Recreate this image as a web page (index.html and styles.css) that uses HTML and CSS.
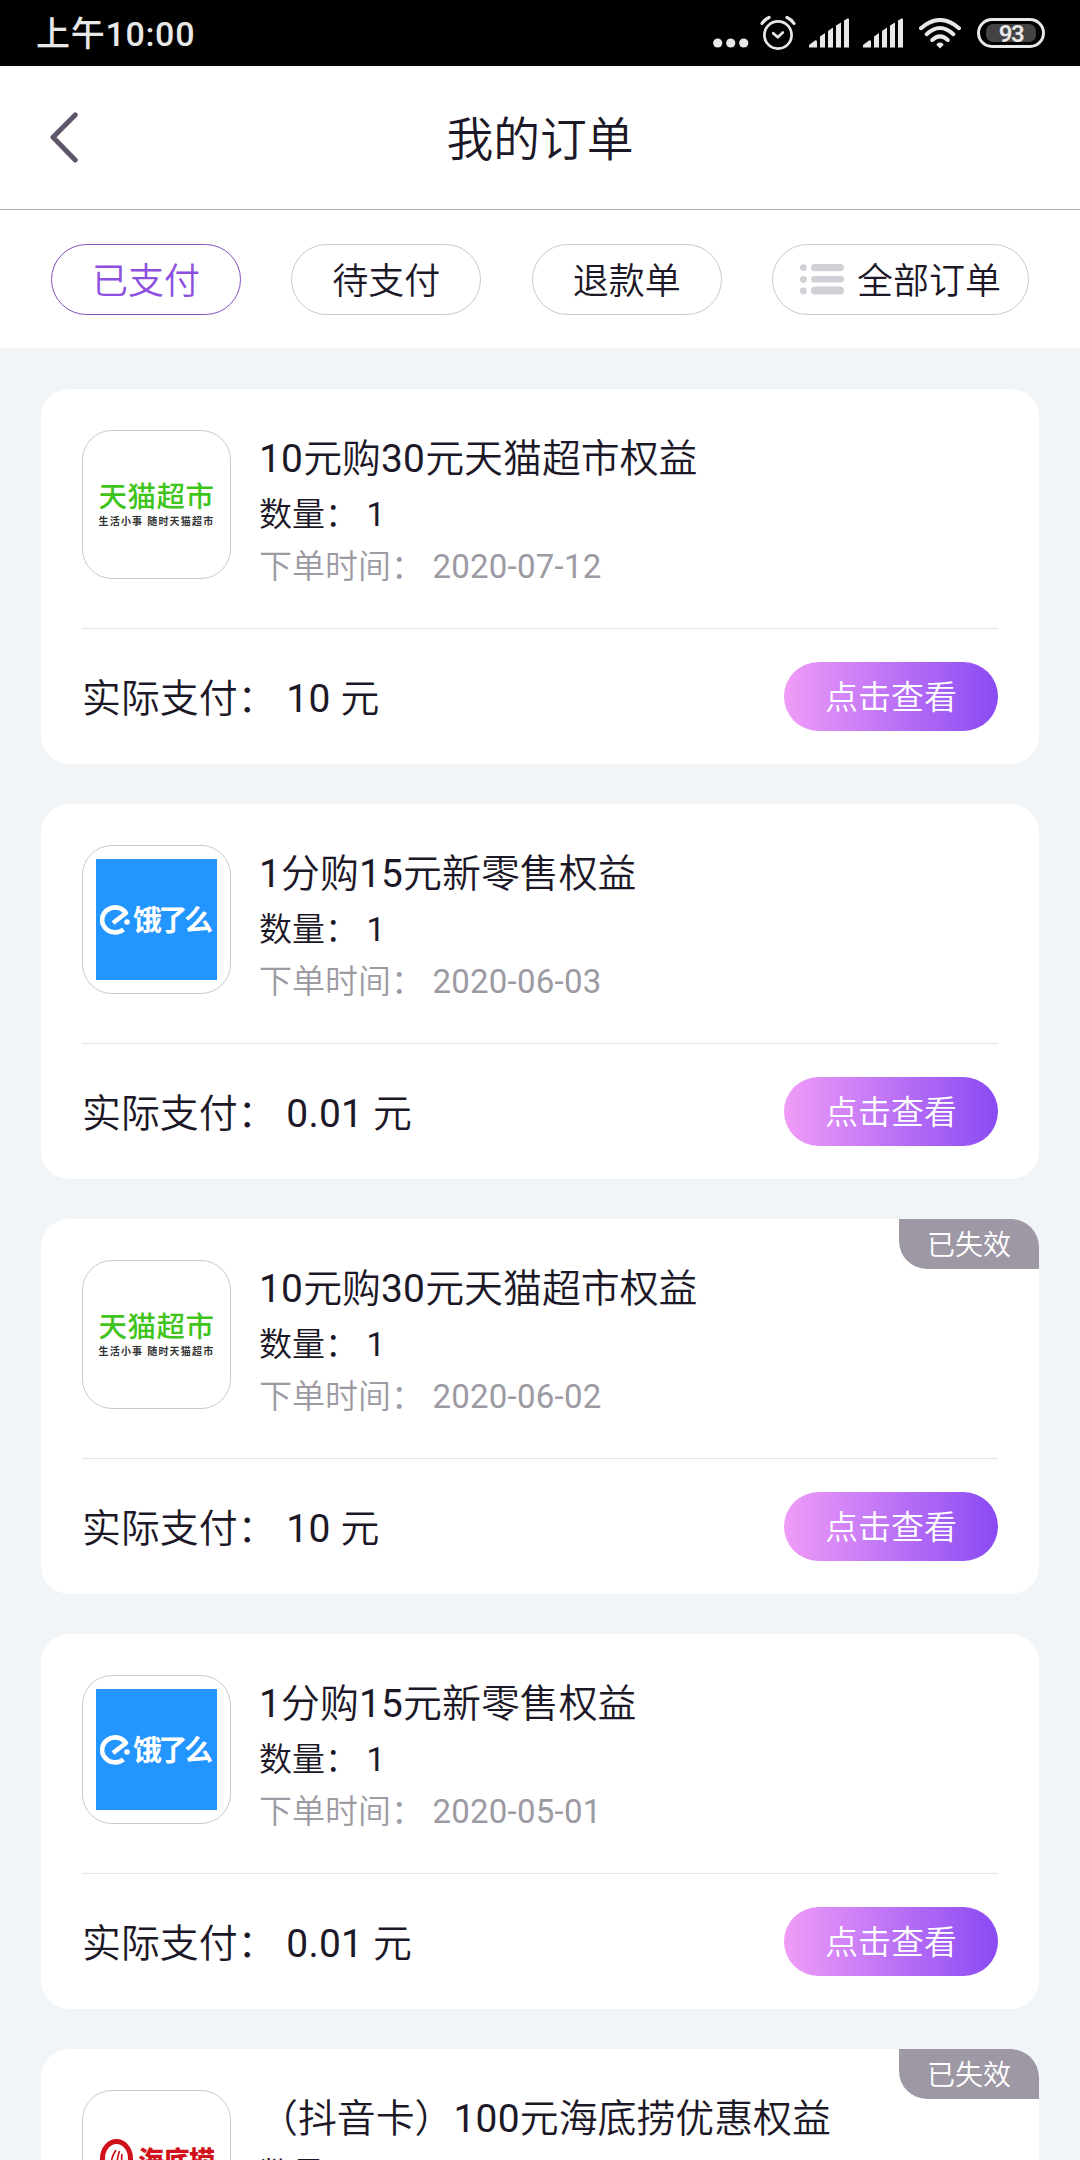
FILE: index.html
```html
<!DOCTYPE html>
<html lang="zh-CN">
<head>
<meta charset="utf-8">
<title>我的订单</title>
<link rel="stylesheet" href="styles.css">
</head>
<body>
<div class="statusbar">
  <span class="clock">上午10:00</span>
  <div class="indicators">
    <svg class="dots" viewBox="0 0 36 10"><g fill="#e8e8e8"><circle cx="4.700" cy="5" r="4.600"/><circle cx="17.700" cy="5" r="4.600"/><circle cx="30.700" cy="5" r="4.600"/></g></svg>
    <svg class="alarm" viewBox="0 0 36 36"><g fill="none" stroke="#e8e8e8" stroke-width="2.700" stroke-linecap="round" stroke-linejoin="round"><circle cx="18" cy="20" r="13.600"/><path d="M13.200 18.200L17.800 22.300L22.800 17.500"/><path d="M2 8.500Q4.500 4.500 9 2.500M34 8.500Q31.500 4.500 27 2.500" stroke-width="3.200"/></g></svg>
    <svg class="signal" viewBox="0 0 40 30"><path d="M0 29.500V27L6 22.500Q8 21.500 8 24V29.500ZM11 29.500V18.500L16 15V29.500ZM19 29.500V13L24 9.500V29.500ZM27 29.500V7.500L32 4.500V29.500ZM35 29.500V2.500L38.500 .5Q40 0 40 1.500V29.500Z" fill="#e8e8e8"/></svg>
    <svg class="signal second" viewBox="0 0 40 30"><path d="M0 29.500V27L6 22.500Q8 21.500 8 24V29.500ZM11 29.500V18.500L16 15V29.500ZM19 29.500V13L24 9.500V29.500ZM27 29.500V7.500L32 4.500V29.500ZM35 29.500V2.500L38.500 .5Q40 0 40 1.500V29.500Z" fill="#e8e8e8"/></svg>
    <svg class="wifi" viewBox="0 0 42 31"><g fill="none" stroke="#e8e8e8" stroke-width="4" stroke-linecap="round"><path d="M2 10.200Q21-6.200 40 10.200"/><path d="M7.600 16.200Q21 3.800 34.400 16.200"/><path d="M13.200 22Q21 14.600 28.800 22"/></g><path d="M21 24.500C23 24.500 24.500 25.700 24.500 27L21 30.500L17.500 27C17.500 25.700 19 24.500 21 24.500Z" fill="#e8e8e8"/></svg>
    <div class="battery"><span class="level">93</span></div>
  </div>
</div>

<header class="navbar">
  <svg class="back" viewBox="0 0 28 51"><path d="M25.200 2.900L3 25.300L25.200 47.900" fill="none" stroke="#5f5769" stroke-width="5" stroke-linecap="round" stroke-linejoin="round"/></svg>
  <h1 class="title">我的订单</h1>
</header>

<nav class="filters">
  <a class="pill active">已支付</a>
  <a class="pill">待支付</a>
  <a class="pill">退款单</a>
  <a class="pill all"><svg class="list" viewBox="0 0 44 31"><g fill="#d1d0d6"><circle cx="3.400" cy="3.600" r="3.400"/><circle cx="3.400" cy="15.500" r="3.400"/><circle cx="3.400" cy="27" r="3.400"/><rect x="11" y="0" width="33" height="7.200" rx="3.600"/><rect x="11" y="12" width="33" height="6.600" rx="3.300"/><rect x="11" y="22.500" width="33" height="8" rx="4"/></g></svg>全部订单</a>
</nav>

<main class="orders">
  <article class="card">
    <div class="item">
      <div class="thumb">
        <svg class="logo" viewBox="0 0 121 121"><text class="tmall-name" x="2.500 31.500 60.500 89.500" y="62.500">天猫超市</text><text class="tmall-slogan" x="2.500 13.700 24.900 36.100 51.200 62.400 73.600 84.800 96 107.200" y="81">生活小事随时天猫超市</text></svg>
      </div>
      <div class="info"><h2 class="name"><b>10</b>元购<b>30</b>元天猫超市权益</h2><p class="count">数量：<b> 1</b></p><p class="date">下单时间：<b> 2020-07-12</b></p></div>
    </div>
    <div class="summary"><span class="paid">实际支付：<b> 10 </b>元</span><a class="view">点击查看</a></div>
  </article>
  <article class="card">
    <div class="item">
      <div class="thumb">
        <svg class="logo" viewBox="0 0 121 121"><rect width="121" height="121" fill="#2395ff"/><path d="M17 64L30 54A13 12.500 0 1 0 27.500 70.500" fill="none" stroke="#fff" stroke-width="4.600" stroke-linejoin="round"/><circle cx="31" cy="63" r="2.800" fill="#fff"/><text class="eleme-name" x="37 62.500 88" y="71.500">饿了么</text></svg>
      </div>
      <div class="info"><h2 class="name"><b>1</b>分购<b>15</b>元新零售权益</h2><p class="count">数量：<b> 1</b></p><p class="date">下单时间：<b> 2020-06-03</b></p></div>
    </div>
    <div class="summary"><span class="paid">实际支付：<b> 0.01 </b>元</span><a class="view">点击查看</a></div>
  </article>
  <article class="card">
    <span class="badge">已失效</span>
    <div class="item">
      <div class="thumb">
        <svg class="logo" viewBox="0 0 121 121"><text class="tmall-name" x="2.500 31.500 60.500 89.500" y="62.500">天猫超市</text><text class="tmall-slogan" x="2.500 13.700 24.900 36.100 51.200 62.400 73.600 84.800 96 107.200" y="81">生活小事随时天猫超市</text></svg>
      </div>
      <div class="info"><h2 class="name"><b>10</b>元购<b>30</b>元天猫超市权益</h2><p class="count">数量：<b> 1</b></p><p class="date">下单时间：<b> 2020-06-02</b></p></div>
    </div>
    <div class="summary"><span class="paid">实际支付：<b> 10 </b>元</span><a class="view">点击查看</a></div>
  </article>
  <article class="card">
    <div class="item">
      <div class="thumb">
        <svg class="logo" viewBox="0 0 121 121"><rect width="121" height="121" fill="#2395ff"/><path d="M17 64L30 54A13 12.500 0 1 0 27.500 70.500" fill="none" stroke="#fff" stroke-width="4.600" stroke-linejoin="round"/><circle cx="31" cy="63" r="2.800" fill="#fff"/><text class="eleme-name" x="37 62.500 88" y="71.500">饿了么</text></svg>
      </div>
      <div class="info"><h2 class="name"><b>1</b>分购<b>15</b>元新零售权益</h2><p class="count">数量：<b> 1</b></p><p class="date">下单时间：<b> 2020-05-01</b></p></div>
    </div>
    <div class="summary"><span class="paid">实际支付：<b> 0.01 </b>元</span><a class="view">点击查看</a></div>
  </article>
  <article class="card last">
    <span class="badge">已失效</span>
    <div class="item">
      <div class="thumb">
        <svg class="logo" viewBox="0 0 121 121"><ellipse cx="20.500" cy="54.500" rx="14" ry="17" fill="none" stroke="#d0111b" stroke-width="5"/><path d="M15 62Q15 53 20 46M21 62Q21 54 23.500 47M27 62Q25 56 26 50" fill="none" stroke="#d0111b" stroke-width="1.700"/><text class="haidilao-name" x="42 67.500 93" y="66">海底捞</text></svg>
      </div>
      <div class="info"><h2 class="name">（抖音卡）<b>100</b>元海底捞优惠权益</h2><p class="count">数量：</p></div>
    </div>
  </article>
</main>
</body>
</html>
```
FILE: styles.css
```css
* { box-sizing: border-box; }

body {
  margin: 0;
  height: 2160px;
  overflow: hidden;
  display: flex;
  flex-direction: column;
  background: #f1f5f8;
  color: #1d1827;
  font-family: Roboto, "Noto Sans CJK SC", sans-serif;
  font-weight: 350;
}

h1, h2, p { margin: 0; font-weight: inherit; }
b { font-weight: 380; letter-spacing: .25px; }
svg { display: block; flex: none; }

.statusbar {
  flex: none;
  height: 66px;
  padding: 0 35px;
  display: flex;
  justify-content: space-between;
  align-items: center;
  background: #000;
  color: #e8e8e8;
}
.clock { font-size: 34px; font-weight: 500; line-height: 66px; letter-spacing: .7px; padding: 2px 0 0 1px; }
.indicators { display: flex; align-items: center; }
.dots { width: 36px; height: 10px; margin: 19px 11px 0 0; }
.alarm { width: 36px; height: 36px; margin-right: 13px; }
.signal { width: 40px; height: 30px; }
.signal.second { margin: 0 16px 0 14px; }
.wifi { width: 42px; height: 31px; margin-right: 16px; }
.battery {
  width: 68px;
  height: 30px;
  padding: 3px 6px;
  border: 3px solid #e8e8e8;
  border-radius: 15px;
}
.level {
  display: block;
  height: 18px;
  border-radius: 7px;
  background: #444;
  font: 600 24px/20px Roboto, sans-serif;
  text-align: center;
  letter-spacing: -1.500px;
}

.navbar {
  flex: none;
  height: 144px;
  padding: 0 50px;
  display: grid;
  grid-template-columns: 28px 1fr 28px;
  align-items: center;
  background: #fff;
  border-bottom: 1px solid #b2b2b6;
}
.back { width: 28px; height: 51px; }
.title { font-size: 46.800px; line-height: 60px; text-align: center; padding-top: 4px; }

.filters {
  flex: none;
  height: 138px;
  padding: 34px 51px 0;
  display: flex;
  justify-content: space-between;
  align-items: flex-start;
  background: #fff;
}
.pill {
  width: 190px;
  height: 71px;
  border: 1px solid #c9c9cd;
  border-radius: 36px;
  display: flex;
  justify-content: center;
  align-items: center;
  font-size: 36px;
  padding-bottom: 3px;
}
.pill.active { color: #8c4fdf; border-color: #8450c0; }
.pill.all { width: 257px; gap: 13px; }
.list { width: 44px; height: 31px; margin-top: 2px; }

.orders {
  flex: 1;
  min-height: 0;
  overflow: hidden;
  padding: 41px 41px 0;
  display: flex;
  flex-direction: column;
  gap: 40px;
}
.card {
  position: relative;
  flex: none;
  height: 375px;
  padding: 41px 41px 0;
  background: #fff;
  border-radius: 28px;
}
.card.last { height: 111px; overflow: hidden; border-radius: 28px 28px 0 0; }
.item {
  height: 199px;
  display: flex;
  align-items: flex-start;
  gap: 28px;
  border-bottom: 1px solid #e4e4e8;
}
.thumb {
  width: 149px;
  height: 149px;
  border: 1px solid #c9c9cd;
  border-radius: 30px;
  display: grid;
  place-items: center;
}
.logo { width: 121px; height: 121px; font-family: "Noto Sans CJK SC", sans-serif; }
.name { font-size: 38.900px; line-height: 57px; padding-bottom: 2px; }
.count { font-size: 33px; line-height: 52px; }
.date { font-size: 33px; line-height: 52px; color: #9c9aa2; }

.summary {
  height: 135px;
  display: flex;
  justify-content: space-between;
  align-items: center;
}
.paid { font-size: 38.900px; line-height: 50px; padding-top: 4px; white-space: pre; }
.view {
  width: 214px;
  height: 69px;
  border-radius: 35px;
  background: linear-gradient(90deg, #f09cf8, #8a4af3);
  color: #fff;
  font-size: 33px;
  line-height: 71px;
  text-align: center;
}
.badge {
  position: absolute;
  top: 0;
  right: 0;
  width: 140px;
  height: 50px;
  border-radius: 0 28px 0 28px;
  background: #9e98a5;
  color: #fff;
  font-size: 28px;
  line-height: 53px;
  text-align: center;
}

.tmall-name { font-size: 28.500px; font-weight: 500; fill: #3fc41c; }
.tmall-slogan { font-size: 10px; font-weight: 700; fill: #333; }
.eleme-name { font-size: 29px; font-weight: 700; fill: #fff; }
.haidilao-name { font-size: 26px; font-weight: 900; fill: #d0111b; }
```
